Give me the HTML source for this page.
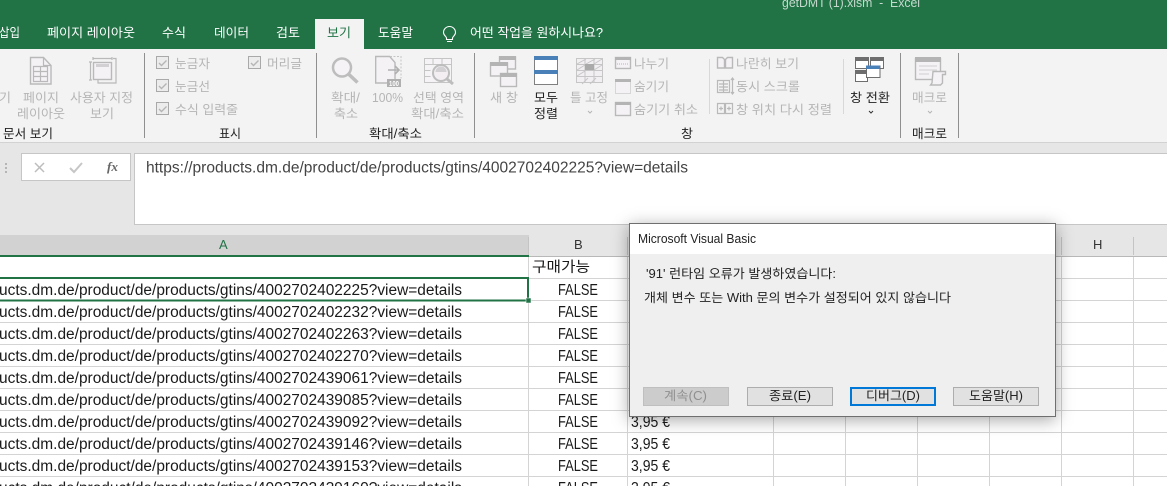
<!DOCTYPE html>
<html lang="ko"><head><meta charset="utf-8"><title>Excel</title>
<style>
html,body{margin:0;padding:0;width:1167px;height:486px;overflow:hidden;background:#fff}
svg{display:block;position:absolute;left:0;top:0}
text{font-family:"Liberation Sans","Noto Sans CJK KR",sans-serif;font-size:12.5px}
.w{fill:#fff}.d{fill:#b5b5b5}.k{fill:#222}.c{font-size:15.5px;fill:#1a1a1a}
.i{fill:#f5f2f6;stroke:#b9b9b9;stroke-width:1.4}
.l{stroke:#b9b9b9;stroke-width:1.2;fill:none}
.b{fill:#e1e1e1;stroke:#adadad}
</style></head><body>
<svg width="1167" height="486" viewBox="0 0 1167 486" xmlns="http://www.w3.org/2000/svg">
<rect width="1167" height="49" fill="#217346"/>
<rect x="315" y="19" width="49" height="30" fill="#f3f3f3"/>
<text x="782" y="7" style="font-size:13px" textLength="138" lengthAdjust="spacingAndGlyphs" fill="#c5d9cd">getDMT (1).xlsm&#160;&#160;-&#160;&#160;Excel</text>
<text class="w" x="-1" y="37" textLength="21" lengthAdjust="spacingAndGlyphs">삽입</text>
<text class="w" x="47" y="37" textLength="88" lengthAdjust="spacingAndGlyphs">페이지 레이아웃</text>
<text class="w" x="162" y="37" textLength="24" lengthAdjust="spacingAndGlyphs">수식</text>
<text class="w" x="214" y="37" textLength="35" lengthAdjust="spacingAndGlyphs">데이터</text>
<text class="w" x="276" y="37" textLength="24" lengthAdjust="spacingAndGlyphs">검토</text>
<text x="327" y="37" textLength="24" lengthAdjust="spacingAndGlyphs" fill="#217346">보기</text>
<text class="w" x="378" y="37" textLength="35" lengthAdjust="spacingAndGlyphs">도움말</text>
<path d="M446.500 39.500v-1.500c0-1.500-3-2.500-3-5.500a6 6 0 0 1 12 0c0 3-3 4-3 5.500v1.500zM447 41.500h5" fill="none" stroke="#fff" stroke-width="1.100"/>
<text class="w" x="470" y="37" textLength="133" lengthAdjust="spacingAndGlyphs">어떤 작업을 원하시나요?</text>

<rect y="49" width="1167" height="93" fill="#f3f3f3"/>
<rect y="142" width="1167" height="1" fill="#d2d2d2"/>
<rect y="143" width="1167" height="92" fill="#e6e6e6"/>
<g fill="#8f8f8f"><rect x="144" y="53" width="1" height="85"/><rect x="316" y="53" width="1" height="85"/><rect x="474" y="53" width="1" height="85"/><rect x="900" y="53" width="1" height="85"/><rect x="958" y="53" width="1" height="85"/></g>
<g fill="#d8d8d8"><rect x="709" y="59" width="1" height="55"/><rect x="843" y="59" width="1" height="55"/></g>

<!-- page layout icon -->
<path class="i" d="M30.500 57.500h13l7.500 8v18.500h-20.500z"/><path class="l" d="M43.500 57.500v8h7.500"/>
<path class="l" d="M33.500 66.500h14v15h-14zM33.500 71.500h14M33.500 76.500h14M40.500 66.500v15"/>
<!-- custom view icon -->
<path class="l" d="M93 57v3M112 57v3M93 58.500h19M113 58.500h3v24.500h-18v-3M89 62h3M90.500 62v18M89 80h3"/>
<rect class="i" x="93.500" y="62.500" width="18" height="17"/><rect x="96" y="64" width="13" height="3" fill="#d2d0d2"/>
<!-- checkboxes -->
<g fill="#ececec" stroke="#a9a9a9"><rect x="156.500" y="56.500" width="12" height="12"/><rect x="156.500" y="79.500" width="12" height="12"/><rect x="156.500" y="102.500" width="12" height="12"/><rect x="248.500" y="56.500" width="12" height="12"/></g>
<path d="M159 63l2.500 2.500 5-5M159 86l2.500 2.500 5-5M159 109l2.500 2.500 5-5M251 63l2.500 2.500 5-5" fill="none" stroke="#b5b5b5" stroke-width="1.400"/>
<!-- zoom icon -->
<circle cx="342" cy="67.500" r="9" fill="#f5f3f5" stroke="#bdbdbd" stroke-width="2.500"/><path d="M349 74.500l8.500 8" stroke="#bdbdbd" stroke-width="3.500" fill="none"/>
<!-- 100% icon -->
<path class="i" d="M375.700 56.500h14l5.300 6v20.500h-19.300z"/><path d="M390 56.500h11v22" fill="none" stroke="#c4c4c4" stroke-dasharray="2 1.500"/>
<path d="M388 70h11M395 66l4 4-4 4" fill="none" stroke="#b0b0b0" stroke-width="1.600"/>
<rect x="387" y="79" width="14" height="8" fill="#b0b0b0"/><text x="389" y="86" textLength="10" lengthAdjust="spacingAndGlyphs" fill="#fff" style="font-size:7.500px;font-weight:bold">100</text>
<!-- selection zoom icon -->
<path d="M424.500 58.500h27v24h-27zM424.500 64.500h27M424.500 70.500h6M424.500 76.500h6M433 58.500v6M442 58.500v6" fill="#f5f3f5" stroke="#c5c5c5"/>
<circle cx="441" cy="73" r="8" fill="#f2eef2" stroke="#bdbdbd" stroke-width="2"/><path d="M435.500 72a5.500 5.500 0 0 1 11 0z" fill="#d2d0d2"/><path d="M447 79l6 5" stroke="#bdbdbd" stroke-width="3" fill="none"/>
<!-- new window -->
<rect class="i" x="499.500" y="57" width="16" height="12"/><rect x="499" y="56" width="17" height="4" fill="#b4b4b4"/>
<rect class="i" x="490.500" y="63" width="17" height="13"/><rect x="490" y="62" width="18" height="4" fill="#b4b4b4"/>
<rect class="i" x="500.500" y="73.500" width="16" height="13"/><rect x="500" y="73" width="17" height="4" fill="#b4b4b4"/>
<!-- arrange all -->
<rect x="534.500" y="56.500" width="23" height="28" fill="#fff" stroke="#808080"/><rect x="534" y="56" width="24" height="4" fill="#4a80b8"/><rect x="534" y="70" width="24" height="4" fill="#4a80b8"/>
<!-- freeze panes -->
<path d="M576.500 58.500h26v24h-26zM576.500 64.500h26M576.500 70.500h26M576.500 76.500h26M585 58.500v24M594 58.500v24" fill="#f2eff2" stroke="#c6c6c6"/>
<path d="M577 64l9-5M586 64l9-5M594 64l8-5M577 70l8-5M577 76l8-5M594 70l8-5M582 84l6-6M590 84l6-6" stroke="#c6c6c6" fill="none"/>
<rect x="585" y="64" width="9" height="6" fill="#aaa"/>
<!-- split/hide/unhide -->
<rect class="i" x="615.500" y="57.500" width="15" height="11"/><rect x="615" y="57" width="16" height="3" fill="#b4b4b4"/><path d="M617 64h12" stroke="#b4b4b4" stroke-dasharray="1 1" fill="none"/>
<rect x="615.500" y="81.500" width="15" height="12" fill="#f5f2f6" stroke="#b9b9b9" stroke-dasharray="1 1"/><rect x="615" y="79" width="16" height="3" fill="#b4b4b4"/>
<rect class="i" x="615.500" y="102.500" width="15" height="13"/><rect x="615" y="102" width="16" height="3" fill="#b4b4b4"/>
<!-- view side by side etc -->
<path class="i" d="M717.500 57.500h5l2 2v8.500h-7zM725.500 59.500l2-2h5v10.500h-7z"/>
<path class="l" d="M717.500 80.500h6v12h-6zM723.500 80.500h6v12h-6zM719 84h9M719 87h9M719 90h9M732.500 78v16M731 80l1.500-2 1.500 2M731 92l1.500 2 1.500-2"/>
<path class="l" d="M717.500 103.500h7v10h-7zM725.500 103.500h7v10h-7zM719 108.500h4M721 106.500v4M727 108.500h4M729 106.500v4"/>
<!-- switch windows -->
<rect x="855.500" y="57.500" width="13" height="11" fill="#fff" stroke="#6e6e6e"/><rect x="855" y="57" width="14" height="4" fill="#6e6e6e"/>
<rect x="870.500" y="57.500" width="13" height="11" fill="#fff" stroke="#6e6e6e"/><rect x="870" y="57" width="14" height="4" fill="#6e6e6e"/>
<rect x="855.500" y="70.500" width="12" height="11" fill="#fff" stroke="#6e6e6e"/><rect x="855" y="70" width="13" height="4" fill="#6e6e6e"/>
<rect x="866.500" y="66" width="13.500" height="11.500" fill="#fff" stroke="#6e6e6e"/><rect x="866" y="65.500" width="14" height="3.500" fill="#4a80b8"/>
<!-- macro -->
<rect class="i" x="915.500" y="58.500" width="25" height="21"/><rect x="915" y="57" width="26" height="5" fill="#b4b4b4"/>
<path d="M919 66h18M919 70h18M919 74h10" stroke="#cfcfcf" fill="none"/>
<path class="i" d="M933 71.500h12.500v3h-3v8.500l-2 2h-10l1.500-2z"/>

<!-- ribbon text -->
<g class="d">
<text x="-1" y="102" textLength="12" lengthAdjust="spacingAndGlyphs">기</text>
<text x="23" y="102" textLength="36" lengthAdjust="spacingAndGlyphs">페이지</text>
<text x="17" y="118" textLength="48" lengthAdjust="spacingAndGlyphs">레이아웃</text>
<text x="70" y="102" textLength="63" lengthAdjust="spacingAndGlyphs">사용자 지정</text>
<text x="90" y="118" textLength="24" lengthAdjust="spacingAndGlyphs">보기</text>
<text x="175" y="68" textLength="35" lengthAdjust="spacingAndGlyphs">눈금자</text>
<text x="175" y="91" textLength="35" lengthAdjust="spacingAndGlyphs">눈금선</text>
<text x="175" y="114" textLength="63" lengthAdjust="spacingAndGlyphs">수식 입력줄</text>
<text x="267" y="68" textLength="35" lengthAdjust="spacingAndGlyphs">머리글</text>
<text x="331" y="102" textLength="29" lengthAdjust="spacingAndGlyphs">확대/</text>
<text x="334" y="118" textLength="24" lengthAdjust="spacingAndGlyphs">축소</text>
<text x="372" y="102" textLength="31" lengthAdjust="spacingAndGlyphs">100%</text>
<text x="413" y="102" textLength="51" lengthAdjust="spacingAndGlyphs">선택 영역</text>
<text x="411" y="118" textLength="53" lengthAdjust="spacingAndGlyphs">확대/축소</text>
<text x="490" y="102" textLength="28" lengthAdjust="spacingAndGlyphs">새 창</text>
<text x="570" y="102" textLength="38" lengthAdjust="spacingAndGlyphs">틀 고정</text>
<text x="634" y="68" textLength="35" lengthAdjust="spacingAndGlyphs">나누기</text>
<text x="634" y="91" textLength="35" lengthAdjust="spacingAndGlyphs">숨기기</text>
<text x="634" y="114" textLength="64" lengthAdjust="spacingAndGlyphs">숨기기 취소</text>
<text x="736" y="68" textLength="63" lengthAdjust="spacingAndGlyphs">나란히 보기</text>
<text x="736" y="91" textLength="64" lengthAdjust="spacingAndGlyphs">동시 스크롤</text>
<text x="736" y="114" textLength="96" lengthAdjust="spacingAndGlyphs">창 위치 다시 정렬</text>
<text x="912" y="102" textLength="35" lengthAdjust="spacingAndGlyphs">매크로</text>
</g>
<g class="k">
<text x="3" y="138" textLength="50" lengthAdjust="spacingAndGlyphs">문서 보기</text>
<text x="219" y="138" textLength="22" lengthAdjust="spacingAndGlyphs">표시</text>
<text x="369" y="138" textLength="53" lengthAdjust="spacingAndGlyphs">확대/축소</text>
<text x="681" y="138" textLength="12" lengthAdjust="spacingAndGlyphs">창</text>
<text x="912" y="138" textLength="35" lengthAdjust="spacingAndGlyphs">매크로</text>
<text x="534" y="102" textLength="24" lengthAdjust="spacingAndGlyphs">모두</text>
<text x="534" y="118" textLength="24" lengthAdjust="spacingAndGlyphs">정렬</text>
<text x="850" y="102" textLength="40" lengthAdjust="spacingAndGlyphs">창 전환</text>
</g>
<path d="M588 111l2 2 2-2M928 111l2 2 2-2" fill="none" stroke="#b5b5b5"/><path d="M869 111l2 2 2-2" fill="none" stroke="#333"/>

<!-- formula bar -->
<g fill="#b5b5b5"><rect x="5" y="163" width="2" height="2"/><rect x="5" y="167" width="2" height="2"/><rect x="5" y="171" width="2" height="2"/></g>
<rect x="21.500" y="153.500" width="109" height="27" fill="#fff" stroke="#c6c6c6"/>
<path d="M35 163l9 9M44 163l-9 9" stroke="#bdbdbd" stroke-width="1.500" fill="none"/>
<path d="M70 168l4 4 8-9" stroke="#c6c6c6" stroke-width="2" fill="none"/>
<text x="107" y="171" style="font-family:'Liberation Serif',serif;font-style:italic;font-weight:bold;font-size:13px" textLength="11" lengthAdjust="spacingAndGlyphs" fill="#666">fx</text>
<rect x="134.500" y="153.500" width="1040" height="71" fill="#fff" stroke="#c6c6c6"/>
<text x="146" y="172.500" style="font-size:15.500px" textLength="542" lengthAdjust="spacingAndGlyphs" fill="#444">https://products.dm.de/product/de/products/gtins/4002702402225?view=details</text>

<!-- headers -->
<rect y="235" width="1167" height="21" fill="#e6e6e6"/>
<rect y="235" width="529" height="20" fill="#d2d2d2"/>
<rect y="256" width="1167" height="1" fill="#b8b8b8"/>
<rect y="255" width="529" height="2" fill="#217346"/>
<g fill="#c4c4c4"><rect x="528" y="237" width="1" height="18"/><rect x="627" y="237" width="1" height="18"/><rect x="773" y="237" width="1" height="18"/><rect x="845" y="237" width="1" height="18"/><rect x="917" y="237" width="1" height="18"/><rect x="989" y="237" width="1" height="18"/><rect x="1061" y="237" width="1" height="18"/><rect x="1133" y="237" width="1" height="18"/></g>
<text x="219" y="249" style="font-size:13px" fill="#217346">A</text>
<text x="574" y="249" style="font-size:13px" fill="#333">B</text>
<text x="1093" y="249" style="font-size:13px" fill="#333">H</text>

<!-- grid -->
<g fill="#d4d4d4">
<rect y="278" width="1167" height="1"/><rect y="300" width="1167" height="1"/><rect y="322" width="1167" height="1"/><rect y="344" width="1167" height="1"/><rect y="366" width="1167" height="1"/><rect y="388" width="1167" height="1"/><rect y="410" width="1167" height="1"/><rect y="432" width="1167" height="1"/><rect y="454" width="1167" height="1"/><rect y="476" width="1167" height="1"/>
<rect x="528" y="257" width="1" height="229"/><rect x="627" y="257" width="1" height="229"/><rect x="773" y="257" width="1" height="229"/><rect x="845" y="257" width="1" height="229"/><rect x="917" y="257" width="1" height="229"/><rect x="989" y="257" width="1" height="229"/><rect x="1061" y="257" width="1" height="229"/><rect x="1133" y="257" width="1" height="229"/>
</g>
<text x="532" y="272" style="font-size:14.500px" textLength="58" lengthAdjust="spacingAndGlyphs" fill="#1a1a1a">구매가능</text>

<g class="cells">
<text class="c" x="-1" y="295" textLength="463" lengthAdjust="spacingAndGlyphs">ucts.dm.de/product/de/products/gtins/4002702402225?view=details</text>
<text class="c" x="-1" y="317" textLength="463" lengthAdjust="spacingAndGlyphs">ucts.dm.de/product/de/products/gtins/4002702402232?view=details</text>
<text class="c" x="-1" y="339" textLength="463" lengthAdjust="spacingAndGlyphs">ucts.dm.de/product/de/products/gtins/4002702402263?view=details</text>
<text class="c" x="-1" y="361" textLength="463" lengthAdjust="spacingAndGlyphs">ucts.dm.de/product/de/products/gtins/4002702402270?view=details</text>
<text class="c" x="-1" y="383" textLength="463" lengthAdjust="spacingAndGlyphs">ucts.dm.de/product/de/products/gtins/4002702439061?view=details</text>
<text class="c" x="-1" y="405" textLength="463" lengthAdjust="spacingAndGlyphs">ucts.dm.de/product/de/products/gtins/4002702439085?view=details</text>
<text class="c" x="-1" y="427" textLength="463" lengthAdjust="spacingAndGlyphs">ucts.dm.de/product/de/products/gtins/4002702439092?view=details</text>
<text class="c" x="-1" y="449" textLength="463" lengthAdjust="spacingAndGlyphs">ucts.dm.de/product/de/products/gtins/4002702439146?view=details</text>
<text class="c" x="-1" y="471" textLength="463" lengthAdjust="spacingAndGlyphs">ucts.dm.de/product/de/products/gtins/4002702439153?view=details</text>
<text class="c" x="-1" y="493" textLength="463" lengthAdjust="spacingAndGlyphs">ucts.dm.de/product/de/products/gtins/4002702439160?view=details</text>
<text class="c" x="558" y="295" textLength="40" lengthAdjust="spacingAndGlyphs">FALSE</text>
<text class="c" x="558" y="317" textLength="40" lengthAdjust="spacingAndGlyphs">FALSE</text>
<text class="c" x="558" y="339" textLength="40" lengthAdjust="spacingAndGlyphs">FALSE</text>
<text class="c" x="558" y="361" textLength="40" lengthAdjust="spacingAndGlyphs">FALSE</text>
<text class="c" x="558" y="383" textLength="40" lengthAdjust="spacingAndGlyphs">FALSE</text>
<text class="c" x="558" y="405" textLength="40" lengthAdjust="spacingAndGlyphs">FALSE</text>
<text class="c" x="558" y="427" textLength="40" lengthAdjust="spacingAndGlyphs">FALSE</text>
<text class="c" x="558" y="449" textLength="40" lengthAdjust="spacingAndGlyphs">FALSE</text>
<text class="c" x="558" y="471" textLength="40" lengthAdjust="spacingAndGlyphs">FALSE</text>
<text class="c" x="558" y="493" textLength="40" lengthAdjust="spacingAndGlyphs">FALSE</text>
<text class="c" x="631" y="427" textLength="39" lengthAdjust="spacingAndGlyphs">3,95 €</text>
<text class="c" x="631" y="449" textLength="39" lengthAdjust="spacingAndGlyphs">3,95 €</text>
<text class="c" x="631" y="471" textLength="39" lengthAdjust="spacingAndGlyphs">3,95 €</text>
<text class="c" x="631" y="493" textLength="39" lengthAdjust="spacingAndGlyphs">3,95 €</text>
</g>
<!-- selection -->
<path d="M-3 278h531v22.500h-531" fill="none" stroke="#217346" stroke-width="2"/>
<rect x="526" y="298" width="5" height="5" fill="#217346" stroke="#fff" stroke-width="0.500"/>
</svg>

<div style="position:absolute;left:629px;top:223px;width:425px;height:192px;background:#efefef;border:1px solid #6f6f6f;box-sizing:content-box;box-shadow:0 3px 16px rgba(0,0,0,.35)"></div>
<svg width="1167" height="486" viewBox="0 0 1167 486" xmlns="http://www.w3.org/2000/svg">
<rect x="630" y="224" width="425" height="30" fill="#fff"/>
<text x="638" y="243" textLength="118" lengthAdjust="spacingAndGlyphs" fill="#222">Microsoft Visual Basic</text>
<text x="646" y="278" textLength="190" lengthAdjust="spacingAndGlyphs" fill="#222">'91' 런타임 오류가 발생하였습니다:</text>
<text x="644" y="302" textLength="307" lengthAdjust="spacingAndGlyphs" fill="#222">개체 변수 또는 With 문의 변수가 설정되어 있지 않습니다</text>
<rect x="643.500" y="387.500" width="85" height="18" fill="#cccccc" stroke="#bfbfbf"/>
<rect class="b" x="747.500" y="387.500" width="85" height="18"/>
<rect x="851" y="388" width="84" height="17" fill="#e1e1e1" stroke="#0078d7" stroke-width="2"/>
<rect class="b" x="953.500" y="387.500" width="85" height="18"/>
<text x="664" y="400" textLength="43" lengthAdjust="spacingAndGlyphs" fill="#8f8f8f">계속(C)</text>
<text x="769" y="400" textLength="42" lengthAdjust="spacingAndGlyphs" fill="#222">종료(E)</text>
<text x="866" y="400" textLength="54" lengthAdjust="spacingAndGlyphs" fill="#222">디버그(D)</text>
<text x="969" y="400" textLength="54" lengthAdjust="spacingAndGlyphs" fill="#222">도움말(H)</text>
</svg>
</body></html>
